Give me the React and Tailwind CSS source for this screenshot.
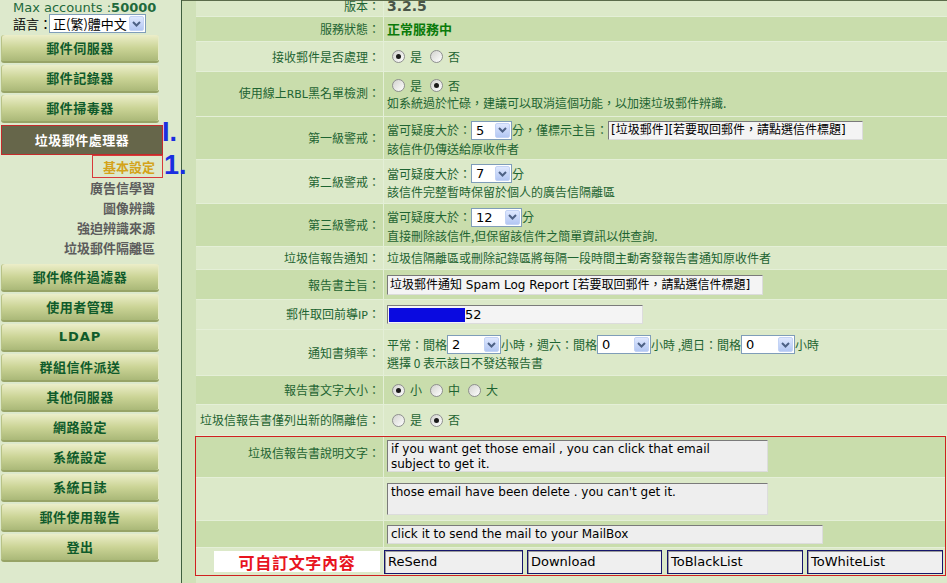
const cjk = "font-['Noto_Sans_CJK_TC',sans-serif]";
const mix = "font-['DejaVu_Sans','Noto_Sans_CJK_TC',sans-serif]";

function Chevron() {
  return (
    <svg width="9" height="6" viewBox="0 0 9 6">
      <path d="M1 1 L4.5 4.5 L8 1" stroke="#4d6185" strokeWidth="2" fill="none" />
    </svg>
  );
}

function Select({ value, w }) {
  return (
    <div className={`flex items-center shrink-0 h-[19px] border border-[#7f9db9] bg-white ${w}`}>
      <span className={`flex-1 pl-[4px] leading-none text-black text-[13px] ${mix}`}>{value}</span>
      <span className="w-[15px] h-[15px] mr-px rounded-[2px] border border-[#c3d3f5] bg-linear-to-b from-[#dfe8fe] to-[#b3c7f3] flex items-center justify-center">
        <Chevron />
      </span>
    </div>
  );
}

function Radio({ checked }) {
  return (
    <span className="inline-flex w-[13px] h-[13px] shrink-0 rounded-full border border-[#8e8f8f] bg-linear-to-br from-[#d2d2ce] to-white items-center justify-center">
      {checked && <span className="w-[5px] h-[5px] rounded-full bg-[#1a1a1a]" />}
    </span>
  );
}

function RadioGroup({ items }) {
  return (
    <div className="flex items-center h-[16px] pl-[5px]">
      {items.map(([text, checked], i) => (
        <div key={i} className={`flex items-center ${i > 0 ? "ml-[8px]" : ""}`}>
          <Radio checked={checked} />
          <span className="ml-[5px] text-[12px]">{text}</span>
        </div>
      ))}
    </div>
  );
}

function Field({ w, h = "h-[19px]", children, bg = "bg-[#f4f4f4]" }) {
  return (
    <div className={`flex items-center shrink-0 ${w} ${h} ${bg} border border-t-[#7a7a7a] border-l-[#7a7a7a] border-b-[#dcdcdc] border-r-[#dcdcdc] text-[12px] text-black ${mix} overflow-hidden whitespace-nowrap`}>
      {children}
    </div>
  );
}

function Row({ h, dark, label, children, labelClass = "items-center", valueClass = "justify-center", pl = "pl-[3px]", last = false }) {
  return (
    <div className={`flex ${h} ${dark ? "bg-[#c9ddac]" : "bg-[#dce9c9]"} ${last ? "" : "border-b border-[#e4efd7]"}`}>
      <div className={`w-[188px] shrink-0 flex justify-end pr-[3px] border-r border-[#e4efd7] text-[12px] text-[#1e6432] whitespace-nowrap ${labelClass}`}>
        {label}
      </div>
      <div className={`flex-1 min-w-0 flex flex-col text-[12px] text-[#1e6432] ${pl} ${valueClass}`}>{children}</div>
    </div>
  );
}

function NavBtn({ children }) {
  return (
    <div className="h-[28px] w-[158px] ml-px mb-[2px] rounded-[3px] bg-linear-to-b from-[#eceec9] via-[#cbd496] to-[#aab878] border-b-2 border-[#97a366] shadow-[inset_-1px_0_0_#e6ebc8,inset_1px_0_0_#b8c287] flex items-center justify-center text-[13px] font-bold text-[#0f5b2b] tracking-[0.5px]">
      {children}
    </div>
  );
}

function SubItem({ children }) {
  return (
    <div className="h-[20px] flex items-center justify-end pr-[26px] text-[13px] font-bold text-[#5c5c5c]">{children}</div>
  );
}

function Sidebar() {
  return (
    <div className={`relative w-[182px] shrink-0 h-full bg-[#dde9cc] border-r border-[#3f5f3f] ${cjk}`}>
      <div className="h-[14px] pl-[13px] flex items-center text-[13px] leading-none text-[#1f6a3c] font-['DejaVu_Sans',sans-serif] whitespace-nowrap">
        Max accounts :<span className="font-bold">50000</span>
      </div>
      <div className="h-[19px] flex items-center pl-[13px] text-[13px] text-black">
        <span className="w-[36px] shrink-0 whitespace-nowrap leading-none">語言：</span>
        <div className="flex items-center h-[19px] w-[97px] shrink-0 border border-[#7f9db9] bg-white">
          <span className="flex-1 pl-[3px] text-[13px] leading-none whitespace-nowrap">正(繁)體中文</span>
          <span className="w-[15px] h-[15px] mr-px rounded-[2px] border border-[#c3d3f5] bg-linear-to-b from-[#dfe8fe] to-[#b3c7f3] flex items-center justify-center">
            <Chevron />
          </span>
        </div>
      </div>
      <div className="mt-[2px]">
        <NavBtn>郵件伺服器</NavBtn>
        <NavBtn>郵件記錄器</NavBtn>
        <NavBtn>郵件掃毒器</NavBtn>
        <div className="h-[30px] w-[162px] ml-px border border-[#c42b2b] bg-[#66664a] flex items-center justify-center text-[13px] font-bold text-white tracking-[0.5px]">
          垃圾郵件處理器
        </div>
        <div className="h-[23px] w-[71px] ml-[92px] border border-[#d83a3a] flex items-center justify-end pr-[7px] text-[13px] font-bold text-[#d4a31a]">
          基本設定
        </div>
        <SubItem>廣告信學習</SubItem>
        <SubItem>圖像辨識</SubItem>
        <SubItem>強迫辨識來源</SubItem>
        <SubItem>垃圾郵件隔離區</SubItem>
        <div className="mt-[6px]">
          <NavBtn>郵件條件過濾器</NavBtn>
          <NavBtn>使用者管理</NavBtn>
          <NavBtn>
            <span className="font-['DejaVu_Sans',sans-serif] tracking-[1px]">LDAP</span>
          </NavBtn>
          <NavBtn>群組信件派送</NavBtn>
          <NavBtn>其他伺服器</NavBtn>
          <NavBtn>網路設定</NavBtn>
          <NavBtn>系統設定</NavBtn>
          <NavBtn>系統日誌</NavBtn>
          <NavBtn>郵件使用報告</NavBtn>
          <NavBtn>登出</NavBtn>
        </div>
      </div>
      <span className="absolute left-[162px] top-[119px] text-[27px] font-bold text-[#1a2ee0] font-['Liberation_Sans',sans-serif] leading-none">I.</span>
      <span className="absolute left-[164px] top-[152px] text-[27px] font-bold text-[#1a2ee0] font-['Liberation_Sans',sans-serif] leading-none">1.</span>
    </div>
  );
}

function BtnField({ w, children }) {
  return (
    <div className={`flex items-center shrink-0 ${w} h-[24px] bg-[#efefef] border border-[#16166a] shadow-[inset_1px_1px_0_#9a9a9a] pl-[3px] text-[13px] text-black font-['DejaVu_Sans',sans-serif]`}>
      {children}
    </div>
  );
}

export default function App() {
  return (
    <div className={`flex w-[947px] h-[583px] overflow-hidden bg-[#dde9cc] ${cjk}`}>
      <Sidebar />
      <div className="flex flex-1 h-full border-t border-[#5b6b4b]">
        <div className="w-[14px] shrink-0 bg-[#d0e1b8]" />
        <div className="flex-1 flex flex-col bg-[#dce9c9]">
          <Row h="h-[16px]" label={<span className="-mt-[2px] leading-[14px]">版本：</span>} labelClass="items-start" valueClass="justify-start">
            <span className="-mt-[2px] leading-[14px] text-[14px] font-bold text-[#4a5548] font-['DejaVu_Sans',sans-serif]">3.2.5</span>
          </Row>
          <Row h="h-[25px]" dark label="服務狀態：">
            <span className="text-[13px] font-bold text-[#0a7a0a]">正常服務中</span>
          </Row>
          <Row h="h-[30px]" label="接收郵件是否處理：">
            <RadioGroup items={[["是", true], ["否", false]]} />
          </Row>
          <Row h="h-[45px]" dark label={<span>使用線上<span className="font-['DejaVu_Sans',sans-serif] text-[11px]">RBL</span>黑名單檢測：</span>}>
            <RadioGroup items={[["是", false], ["否", true]]} />
            <div className="leading-[16px] mt-px">如系統過於忙碌，建議可以取消這個功能，以加速垃圾郵件辨識.</div>
          </Row>
          <Row h="h-[43px]" dark label="第一級警戒：">
            <div className="flex items-center h-[21px] whitespace-nowrap">
              當可疑度大於：<Select w="w-[41px]" value="5" />分，僅標示主旨：
              <Field w="w-[255px]">
                <span className="pl-[2px]">[垃圾郵件][若要取回郵件，請點選信件標題]</span>
              </Field>
            </div>
            <div className="leading-[16px]">該信件仍傳送給原收件者</div>
          </Row>
          <Row h="h-[44px]" label="第二級警戒：">
            <div className="flex items-center h-[21px] whitespace-nowrap">
              當可疑度大於：<Select w="w-[41px]" value="7" />分
            </div>
            <div className="leading-[16px]">該信件完整暫時保留於個人的廣告信隔離區</div>
          </Row>
          <Row h="h-[43px]" dark label="第三級警戒：">
            <div className="flex items-center h-[21px] whitespace-nowrap">
              當可疑度大於：<Select w="w-[51px]" value="12" />分
            </div>
            <div className="leading-[16px]">直接刪除該信件,但保留該信件之簡單資訊以供查詢.</div>
          </Row>
          <Row h="h-[23px]" label="垃圾信報告通知：">
            <div className="leading-[16px]">垃圾信隔離區或刪除記錄區將每隔一段時間主動寄發報告書通知原收件者</div>
          </Row>
          <Row h="h-[30px]" dark label="報告書主旨：">
            <Field w="w-[376px]" h="h-[20px]">
              <span className="pl-[2px]">垃圾郵件通知 Spam Log Report [若要取回郵件，請點選信件標題]</span>
            </Field>
          </Row>
          <Row h="h-[30px]" label={<span>郵件取回前導<span className="font-['DejaVu_Sans',sans-serif] text-[11px]">IP</span>：</span>}>
            <Field w="w-[256px]">
              <span className="ml-px w-[76px] h-[14px] bg-[#0a0ae0]" />
              <span className="text-[13px]">52</span>
            </Field>
          </Row>
          <Row h="h-[46px]" label="通知書頻率：">
            <div className="flex items-center h-[21px] whitespace-nowrap">
              平常：間格<Select w="w-[54px]" value="2" />小時，週六：間格<Select w="w-[54px]" value="0" />小時 ,週日：間格
              <Select w="w-[54px]" value="0" />小時
            </div>
            <div className="leading-[16px]">選擇 0 表示該日不發送報告書</div>
          </Row>
          <Row h="h-[29px]" dark label="報告書文字大小：">
            <RadioGroup items={[["小", true], ["中", false], ["大", false]]} />
          </Row>
          <Row h="h-[31px]" label="垃圾信報告書僅列出新的隔離信：">
            <RadioGroup items={[["是", false], ["否", true]]} />
          </Row>
          <div className="border border-[#d02020] -ml-px mr-px">
            <Row h="h-[41px]" dark label="垃圾信報告書說明文字：" labelClass="items-start pt-[7px]" valueClass="justify-start pt-[3px]">
              <Field w="w-[381px]" h="h-[32px]" bg="bg-[#eeeeee]">
                <div className="self-start pl-[3px] pt-px leading-[15px] text-[12px] font-['DejaVu_Sans',sans-serif]">
                  if you want get those email , you can click that email
                  <br />
                  subject to get it.
                </div>
              </Field>
            </Row>
            <Row h="h-[43px]" label="" valueClass="justify-start pt-[5px]">
              <Field w="w-[381px]" h="h-[32px]" bg="bg-[#eeeeee]">
                <div className="self-start pl-[3px] pt-px leading-[15px] text-[12px] font-['DejaVu_Sans',sans-serif]">
                  those email have been delete . you can't get it.
                </div>
              </Field>
            </Row>
            <Row h="h-[27px]" dark label="">
              <Field w="w-[436px]" bg="bg-[#eeeeee]">
                <span className="pl-[3px] text-[12px] font-['DejaVu_Sans',sans-serif]">click it to send the mail to your MailBox</span>
              </Field>
            </Row>
            <Row
              h="h-[27px]"
              last
              pl="pl-0"
              label={
                <div className="w-[166px] h-[21px] bg-white flex items-center justify-center text-[16px] font-bold text-[#e8141e] tracking-[0.7px]">
                  可自訂文字內容
                </div>
              }
              labelClass="items-center"
            >
              <div className="flex items-center">
                <BtnField w="w-[139px]">ReSend</BtnField>
                <div className="w-[4px]" />
                <BtnField w="w-[135px]">Download</BtnField>
                <div className="w-[5px]" />
                <BtnField w="w-[136px]">ToBlackList</BtnField>
                <div className="w-[4px]" />
                <BtnField w="w-[136px]">ToWhiteList</BtnField>
              </div>
            </Row>
          </div>
        </div>
      </div>
    </div>
  );
}
